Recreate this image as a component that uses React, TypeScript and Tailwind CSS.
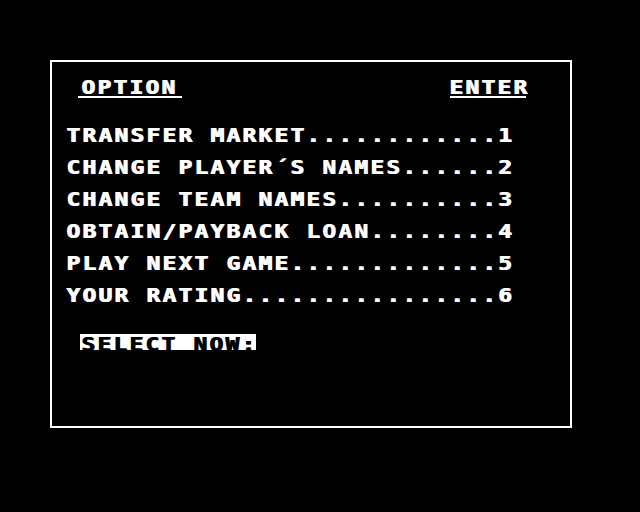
const options = [
  "TRANSFER MARKET",
  "CHANGE PLAYER´S NAMES",
  "CHANGE TEAM NAMES",
  "OBTAIN/PAYBACK LOAN",
  "PLAY NEXT GAME",
  "YOUR RATING",
];

// glyphs are widened 1.2x so each character cell stays 16px
const wide = "inline-block origin-left scale-x-[1.2] whitespace-pre";

export default function App() {
  return (
    <div className="w-[640px] h-[512px] bg-black overflow-hidden pt-[60px] pl-[50px] text-white font-['DejaVu_Sans_Mono',monospace] font-bold text-[19px] tracking-[1.89px] [text-shadow:1px_0_0_currentColor]">
      {/* Menu frame */}
      <div className="w-[522px] h-[368px] border-2 border-white pt-[15px]">
        {/* Header */}
        <div className="flex pl-[29px]">
          <div className="flex flex-col w-[96px]">
            <span className={`leading-[20px] ${wide}`}>OPTION</span>
            <div className="h-[2px] w-[104px] bg-white -ml-[3px] -mt-[1px]" />
          </div>
          <div className="flex flex-col ml-[272px]">
            <span className={`leading-[20px] ${wide}`}>ENTER</span>
            <div className="h-[2px] w-[76px] bg-white ml-[1px] -mt-[1px]" />
          </div>
        </div>

        {/* Options */}
        <div className="mt-[21px] pl-[14px]">
          {options.map((label, i) => (
            <div key={label} className="h-[32px] leading-[32px]">
              <span className={wide}>{label.padEnd(27, ".") + (i + 1)}</span>
            </div>
          ))}
        </div>

        {/* Prompt */}
        <div className="mt-[23px] pl-[28px] h-[16px]">
          <div className="w-[176px] h-[16px] leading-[16px] pt-[2px] bg-white text-black pl-[1px]">
            <span className={wide}>SELECT NOW:</span>
          </div>
        </div>
      </div>
    </div>
  );
}
